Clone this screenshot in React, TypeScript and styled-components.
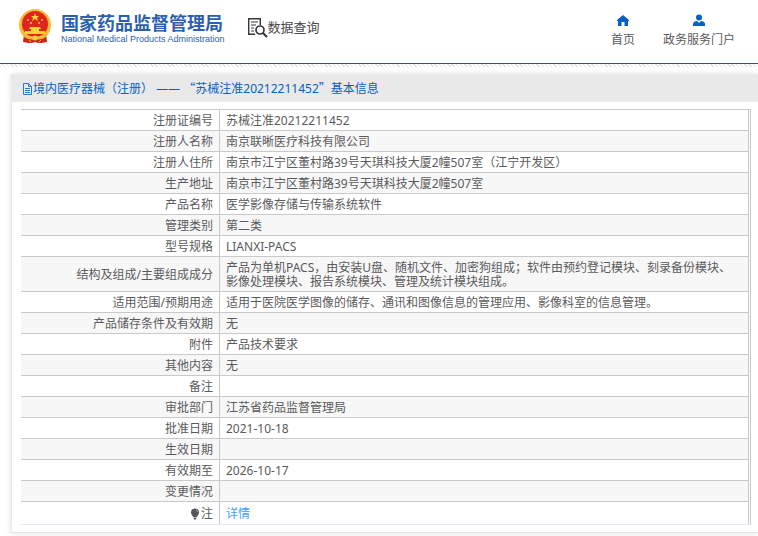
import React from "react";
import styled, { createGlobalStyle } from "styled-components";

const GlobalStyle = createGlobalStyle`
  * { box-sizing: border-box; }
  body {
    margin: 0;
    background: #fff;
    color: #5a5a5c;
    font: 12px/14px "Noto Sans", "Noto Sans CJK SC", sans-serif;
    overflow-x: hidden;
  }
`;

const Header = styled.header`
  display: flex;
  align-items: flex-start;
  height: 64px;
  padding: 8px 23px 0 18px;
  border-bottom: 1px solid #0a5cb0;
`;

const Hatch = styled.div`
  height: 3px;
  background: repeating-linear-gradient(45deg, #e2e2e2 0 1px, #fff 1px 3px);
`;

const Brand = styled.a`
  display: flex;
  gap: 9px;
  color: #2c5fae;
  text-decoration: none;
`;

const BrandText = styled.span`
  display: flex;
  flex-direction: column;
  padding-top: 4px;
`;

const BrandName = styled.strong`
  font: 700 18px/20px "Noto Sans CJK SC", sans-serif;
  white-space: nowrap;
`;

const BrandSub = styled.span`
  font: 9px/14px "Liberation Sans", sans-serif;
  white-space: nowrap;
`;

const Section = styled.h1`
  display: flex;
  align-items: center;
  margin: 8px 0 0 22px;
  color: #48484c;
  font: 400 13px/22px "Noto Sans CJK SC", sans-serif;
`;

const Nav = styled.nav`
  display: flex;
  gap: 28px;
  margin-left: auto;
  padding-top: 6px;
`;

const NavLink = styled.a`
  display: flex;
  flex-direction: column;
  align-items: center;
  gap: 6px;
  color: #5a5a5c;
  text-decoration: none;

  svg { fill: #0561c4; }
`;

const Card = styled.main`
  margin: 7px 0 4px 11px;
  padding-bottom: 7px;
  border-left: 1px solid #e9e9e9;
  border-bottom: 1px solid #e6e6e8;
  box-shadow: 0 0 6px rgba(0, 0, 0, 0.12);
  background: #fff;
`;

const Title = styled.h2`
  display: flex;
  align-items: center;
  height: 28px;
  margin: 0;
  padding: 2px 0 0 10px;
  background: #e9e9e9;
  border-bottom: 1px solid #ebecf5;
  color: #0561c4;
  font-size: 12px;
  font-weight: 400;
  white-space: pre;

  svg { flex: none; }
`;

const Punct = styled.span`
  font-family: "Noto Sans CJK SC", sans-serif;
`;

const TableFrame = styled.div`
  margin: 7px 7px 0 9px;
  padding-right: 1px;
  border-top: 1px solid #c9c9cc;
  border-right: 1px solid #c9c9cc;
  border-bottom: 1px solid #e8eaf5;
`;

const Table = styled.table`
  width: 100%;
  border-collapse: separate;
  border-spacing: 0;
  table-layout: fixed;
  border-right: 1px solid #c9c9cc;
`;

const LabelCol = styled.col`
  width: 199px;
`;

const Row = styled.tr`
  &:nth-child(even) { background: #f7f7f7; }
  th, td { border-bottom: 1px solid #c9c9cc; }
  &:last-child th, &:last-child td { border-bottom: 0; height: 22px; }
`;

const Label = styled.th`
  padding: 4px 6px 2px;
  border-right: 1px solid #c9c9cc;
  font-weight: 400;
  text-align: right;
`;

const Value = styled.td`
  height: 21px;
  padding: 4px 6px 2px;
`;

const Note = styled.span`
  display: flex;
  align-items: center;
  justify-content: flex-end;
  gap: 1px;
`;

const DetailLink = styled.a`
  color: #409eff;
  text-decoration: none;
`;

function Emblem() {
  return (
    <svg width="34" height="36" viewBox="0 0 34 36" aria-hidden="true">
      <path d="M6 26h22l1 8-7 1-5-1-5 1-7-1z" fill="#d7201c" />
      <circle cx="17" cy="17" r="16" fill="#f0b92e" />
      <circle cx="17" cy="16" r="13" fill="#e2231e" />
      <circle cx="17" cy="17" r="15" fill="none" stroke="#f7cf43" strokeDasharray="2 1" />
      <path d="m17 5 1 3h3l-2 2 1 3-3-2-3 2 1-3-2-2h3z" fill="#fbd23c" />
      <g fill="#fbd23c">
        <circle cx="10" cy="12" r="1" />
        <circle cx="24" cy="12" r="1" />
        <circle cx="13" cy="15" r="1" />
        <circle cx="21" cy="15" r="1" />
        <path d="M12 19h10l1 2h-2v2h6v3H7v-3h6v-2h-2z" />
      </g>
      <path d="M5 27c6 2 18 2 24 0l-3 3c-5 1-13 1-18 0z" fill="#f3bd2c" />
      <path d="M7 30c5 2 15 2 20 0v4l-5 1-5-1-5 1-5-1z" fill="#d7201c" />
      <circle cx="17" cy="30" r="2.5" fill="#f8cc3f" />
      <path d="m11 32 2 2m10-2-2 2" fill="none" stroke="#f3bd2c" />
    </svg>
  );
}

function SearchDocIcon() {
  return (
    <svg width="21" height="21" viewBox="0 0 21 21" fill="none" stroke="#35363f" aria-hidden="true">
      <path d="M8 17.3H1.7V1.7h11.6V8" strokeWidth="1.4" />
      <path d="M4 5h7M4 8h5M4 11h3M4 14h3" strokeWidth="1.2" />
      <circle cx="13" cy="13" r="4" strokeWidth="1.7" />
      <path d="m16 16 4 4" strokeWidth="2.2" />
    </svg>
  );
}

function HomeIcon() {
  return (
    <svg width="14" height="13" viewBox="0 0 14 13" aria-hidden="true">
      <path d="M7 1 1 6v1h1v5h3.5V8h3v4H12V7h1V6z" />
    </svg>
  );
}

function UserIcon() {
  return (
    <svg width="14" height="13" viewBox="0 0 14 13" aria-hidden="true">
      <circle cx="7" cy="3.5" r="3" />
      <path d="M1 12v-2c0-2 2-3 4-3l2 2 2-2c2 0 4 1 4 3v2z" />
    </svg>
  );
}

function FileIcon() {
  return (
    <svg width="11" height="12" viewBox="0 0 11 12" fill="none" stroke="#3474c4" aria-hidden="true">
      <path d="M1.5.5h5l3 3v8h-8zM6.5.5v3h3M3 5.5h5M3 7.5h5M3 9.5h5" />
    </svg>
  );
}

function BulbIcon() {
  return (
    <svg width="10" height="12" viewBox="0 0 10 12" aria-hidden="true">
      <path d="M5 .5a4 4 0 0 1 4 4C9 7 7 7.500 7 9H3c0-1.500-2-2-2-4.500a4 4 0 0 1 4-4zM3.500 9.500h3L6 11.500H4z" fill="#55555a" />
      <path d="M6 2q1.500.5 1.500 2" fill="none" stroke="#ccc" strokeWidth=".7" />
    </svg>
  );
}

const rows: [React.ReactNode, React.ReactNode][] = [
  ["注册证编号", "苏械注准20212211452"],
  ["注册人名称", "南京联晰医疗科技有限公司"],
  ["注册人住所", "南京市江宁区董村路39号天琪科技大厦2幢507室（江宁开发区）"],
  ["生产地址", "南京市江宁区董村路39号天琪科技大厦2幢507室"],
  ["产品名称", "医学影像存储与传输系统软件"],
  ["管理类别", "第二类"],
  ["型号规格", "LIANXI-PACS"],
  [
    "结构及组成/主要组成成分",
    "产品为单机PACS，由安装U盘、随机文件、加密狗组成；软件由预约登记模块、刻录备份模块、影像处理模块、报告系统模块、管理及统计模块组成。",
  ],
  ["适用范围/预期用途", "适用于医院医学图像的储存、通讯和图像信息的管理应用、影像科室的信息管理。"],
  ["产品储存条件及有效期", "无"],
  ["附件", "产品技术要求"],
  ["其他内容", "无"],
  ["备注", ""],
  ["审批部门", "江苏省药品监督管理局"],
  ["批准日期", "2021-10-18"],
  ["生效日期", ""],
  ["有效期至", "2026-10-17"],
  ["变更情况", ""],
  [<Note><BulbIcon />注</Note>, <DetailLink href="#detail">详情</DetailLink>],
];

export default function App() {
  return (
    <div lang="zh-CN">
      <GlobalStyle />
      <Header>
        <Brand href="#top">
          <Emblem />
          <BrandText>
            <BrandName>国家药品监督管理局</BrandName>
            <BrandSub>National Medical Products Administration</BrandSub>
          </BrandText>
        </Brand>
        <Section>
          <SearchDocIcon />
          数据查询
        </Section>
        <Nav>
          <NavLink href="#home"><HomeIcon />首页</NavLink>
          <NavLink href="#portal"><UserIcon />政务服务门户</NavLink>
        </Nav>
      </Header>
      <Hatch />
      <Card>
        <Title>
          <FileIcon />
          <span>
            境内医疗器械（注册） —— <Punct>“</Punct>苏械注准20212211452<Punct>”</Punct>基本信息
          </span>
        </Title>
        <TableFrame>
          <Table>
            <colgroup>
              <LabelCol />
              <col />
            </colgroup>
            <tbody>
              {rows.map(([label, value], index) => (
                <Row key={index}>
                  <Label scope="row">{label}</Label>
                  <Value>{value}</Value>
                </Row>
              ))}
            </tbody>
          </Table>
        </TableFrame>
      </Card>
    </div>
  );
}
